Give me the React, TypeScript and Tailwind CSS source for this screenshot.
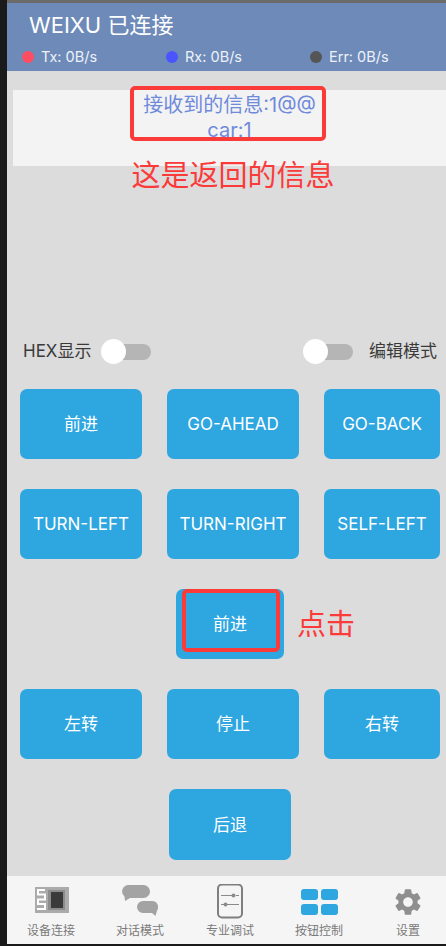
import React from "react";
import { MdSettings } from "react-icons/md";

const font = { fontFamily: '"Inter", "Noto Sans CJK SC", sans-serif' };

function Btn({ label, w, h = "h-[70px]" }: { label: string; w: string; h?: string }) {
  return (
    <div className={`${w} ${h} flex shrink-0 items-center justify-center rounded-[7px] bg-[#2ea6e0] pt-[2px] text-[17px] text-white`}>
      {label}
    </div>
  );
}

function Row({ labels }: { labels: [string, string, string] }) {
  return (
    <div className="flex gap-[25px] pl-[13px]">
      <Btn label={labels[0]} w="w-[122px]" />
      <Btn label={labels[1]} w="w-[132px]" />
      <Btn label={labels[2]} w="w-[116px]" />
    </div>
  );
}

function Toggle() {
  return (
    <div className="relative h-[16px] w-[46px] rounded-full bg-[#b5b5b5]">
      <div className="absolute -top-[5px] left-[-4px] h-[25px] w-[25px] rounded-full bg-white" />
    </div>
  );
}

function Tab({ label, icon, cls }: { label: string; icon: React.ReactNode; cls: string }) {
  return (
    <div className={`flex flex-col items-center ${cls}`}>
      <div className="flex h-[36px] items-center justify-center">{icon}</div>
      <div className="mt-[2px] whitespace-nowrap text-[12px] leading-[18px] text-[#7a7a7a]">{label}</div>
    </div>
  );
}

const ChipIcon = (
  <svg width="36" height="36" viewBox="0 0 36 36">
    <rect x="2" y="3" width="34" height="26" fill="#ababab" />
    <rect x="15" y="6" width="17" height="20" fill="#8c8c8c" />
    <rect x="18" y="8" width="12" height="16" fill="#3a3a3a" />
    <path d="M12 6H5v4.500h7v5H5M12 15.500H5V20h7v5H4" fill="none" stroke="#fff" strokeWidth="2" />
  </svg>
);

const ChatIcon = (
  <svg width="36" height="36" viewBox="0 0 36 36">
    <path d="M6.500 1h15a6.500 6.500 0 0 1 0 13H8l-5 3 -.5-4.500A6.500 6.500 0 0 1 6.500 1Z" fill="#a3a3a3" />
    <path d="M21 17h9a6 6 0 0 1 5 9.500L33.500 32 30 29H21a6 6 0 0 1 0-12Z" fill="#a3a3a3" />
  </svg>
);

const SliderIcon = (
  <svg width="26" height="36" viewBox="0 0 26 36">
    <rect x="1" y="0.500" width="24" height="33" rx="4" fill="none" stroke="#7f7f7f" strokeWidth="2" />
    <path d="M4 11.500h12M19 11.500h3M4 20.500h3M10 20.500h12" stroke="#8a8a8a" strokeWidth="1.200" />
    <circle cx="16.500" cy="11.500" r="2" fill="#8a8a8a" />
    <circle cx="8.500" cy="20.500" r="2" fill="#8a8a8a" />
  </svg>
);

const GridIcon = (
  <div className="grid grid-cols-[17px_17px] grid-rows-[11px_11px] gap-x-[3px] gap-y-[4px]">
    <div className="rounded-[3px] bg-[#2ea6e0]" />
    <div className="rounded-[3px] bg-[#2ea6e0]" />
    <div className="rounded-[3px] bg-[#2ea6e0]" />
    <div className="rounded-[3px] bg-[#2ea6e0]" />
  </div>
);

export default function App() {
  return (
    <div className="flex h-[946px] w-[446px] overflow-hidden bg-[#1a1a1a]" style={font}>
      <div className="w-[7px] shrink-0" />
      <div className="flex min-w-0 flex-1 flex-col">
        <div className="h-[3px] shrink-0 bg-[#6b6b6b]" />
        <header className="flex h-[68px] shrink-0 flex-col bg-[#6d8ab8] text-white">
          <div className="pl-[22px] pt-[7px] text-[22px] leading-[30px]">WEIXU 已连接</div>
          <div className="mt-[8px] flex text-[14.500px] leading-[18px] text-[#eef2f8]">
            <div className="flex w-[144px] items-center gap-[7px] pl-[15px]">
              <span className="h-[12px] w-[12px] rounded-full bg-[#ff4d63]" />Tx: 0B/s
            </div>
            <div className="flex w-[144px] items-center gap-[7px] pl-[15px]">
              <span className="h-[12px] w-[12px] rounded-full bg-[#4a55ff]" />Rx: 0B/s
            </div>
            <div className="flex items-center gap-[7px] pl-[15px]">
              <span className="h-[12px] w-[12px] rounded-full bg-[#555555]" />Err: 0B/s
            </div>
          </div>
        </header>

        <main className="flex min-h-0 flex-1 flex-col bg-[#dcdcdc]">
          <div className="relative ml-[6px] mt-[19px] h-[76px] bg-[#f3f3f3] pt-[3px] text-center text-[20px] leading-[25px] text-[#6f8adb]">
            接收到的信息:1@@
            <br />
            car:1
            <div className="absolute left-[117px] top-[-4px] h-[55px] w-[196px] rounded-[5px] border-[4px] border-[#fb3a3a]" />
            <div className="absolute left-[7px] right-0 top-[68px] text-center text-[29px] leading-[36px] text-[#fb3a3a]">
              这是返回的信息
            </div>
          </div>

          <div className="mt-[173px] flex h-[26px] items-center justify-between pl-[16px] pr-[9px] text-[17px] text-[#3a3a3a]">
            <div className="flex items-center gap-[14px]">
              <span>HEX显示</span>
              <Toggle />
            </div>
            <div className="flex items-center gap-[16px]">
              <Toggle />
              <span>编辑模式</span>
            </div>
          </div>

          <div className="mt-[24px] flex flex-col gap-[30px]">
            <Row labels={["前进", "GO-AHEAD", "GO-BACK"]} />
            <Row labels={["TURN-LEFT", "TURN-RIGHT", "SELF-LEFT"]} />
            <div className="flex items-center pl-[169px]">
              <div className="relative">
                <Btn label="前进" w="w-[108px]" />
                <div className="absolute left-[6px] top-[0px] h-[63px] w-[98px] rounded-[5px] border-[4px] border-[#fb3a3a]" />
              </div>
              <span className="ml-[13px] pt-[2px] text-[29px] text-[#fb3a3a]">点击</span>
            </div>
            <Row labels={["左转", "停止", "右转"]} />
            <div className="pl-[162px]">
              <Btn label="后退" w="w-[122px]" h="h-[71px]" />
            </div>
          </div>
        </main>

        <nav className="flex h-[68px] shrink-0 bg-[#f5f5f5] pl-[20px] pt-[8px]">
          <Tab label="设备连接" icon={ChipIcon} cls="w-[48px]" />
          <Tab label="对话模式" icon={ChatIcon} cls="ml-[41px] w-[48px]" />
          <Tab label="专业调试" icon={SliderIcon} cls="ml-[42px] w-[48px]" />
          <Tab label="按钮控制" icon={GridIcon} cls="ml-[41px] w-[48px]" />
          <Tab label="设置" icon={<MdSettings size={32} color="#8f8f8f" />} cls="ml-[41px] w-[48px]" />
        </nav>
        <div className="h-[2px] shrink-0" />
      </div>
    </div>
  );
}
